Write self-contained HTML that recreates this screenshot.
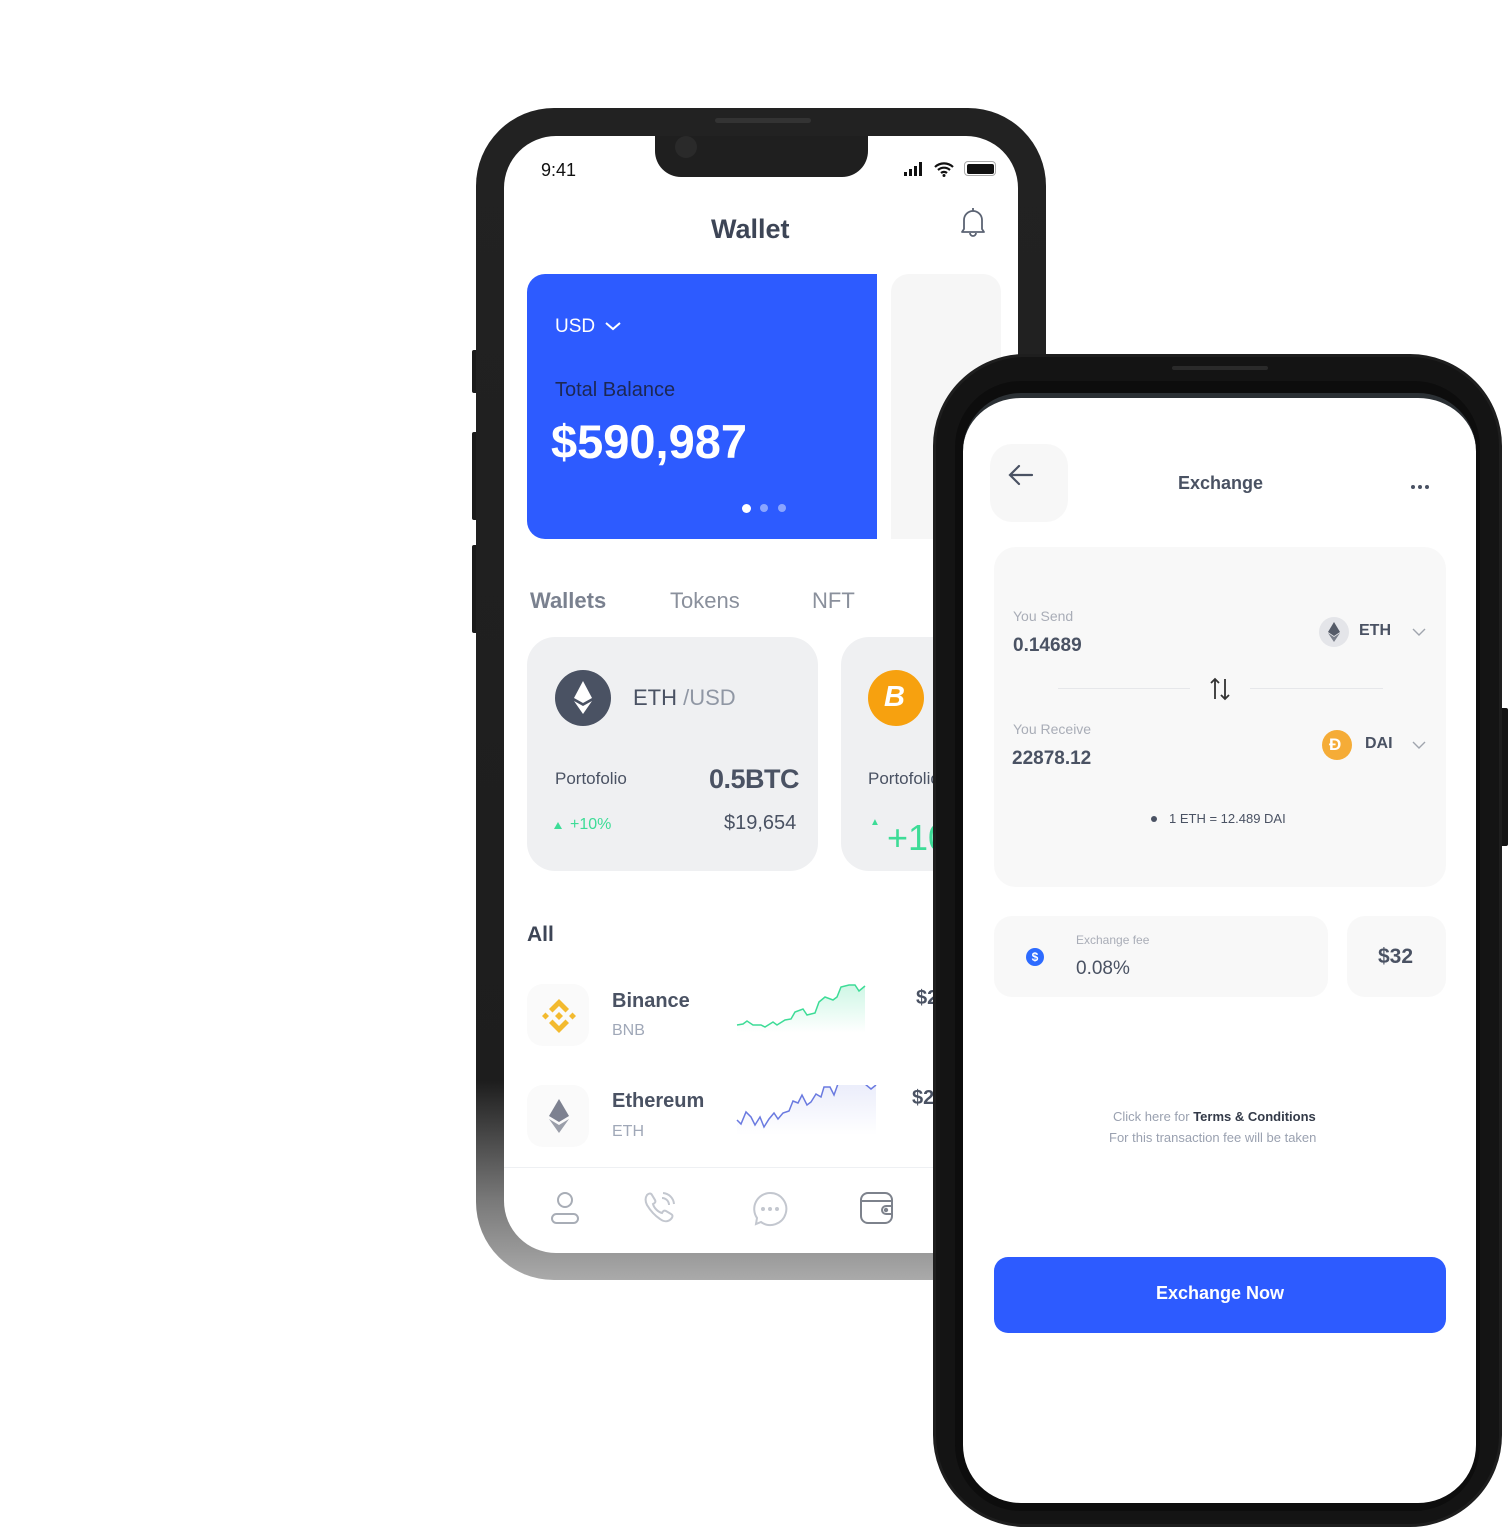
<!DOCTYPE html>
<html><head><meta charset="utf-8"><style>
*{margin:0;padding:0;box-sizing:border-box}
body{width:1508px;height:1528px;background:#fff;position:relative;overflow:hidden;font-family:"Liberation Sans",sans-serif;color:#3d4556}
.a{position:absolute}
.t{position:absolute;white-space:nowrap;line-height:1}
</style></head><body>

<div class="a" style="left:472px;top:350px;width:8px;height:43px;background:#1a1a1a;border-radius:2px"></div>
<div class="a" style="left:472px;top:432px;width:8px;height:88px;background:#1a1a1a;border-radius:2px"></div>
<div class="a" style="left:472px;top:545px;width:8px;height:88px;background:#1a1a1a;border-radius:2px"></div>
<div class="a" style="left:476px;top:108px;width:570px;height:1172px;border-radius:78px;background:linear-gradient(180deg,#222 0%,#1d1d1d 83%,#777 93%,#aaa 100%)"></div>
<div class="a" style="left:504px;top:136px;width:514px;height:1117px;border-radius:52px;background:#fff;overflow:hidden">
  <div class="a" style="left:151px;top:-2px;width:213px;height:43px;background:#1f1f1f;border-radius:0 0 26px 26px"></div>
  <div class="a" style="left:171px;top:0px;width:22px;height:22px;border-radius:50%;background:#2a2a2a"></div>
</div>
<div class="a" style="left:715px;top:118px;width:96px;height:5px;border-radius:3px;background:#333"></div>
<div class="t" style="left:541px;top:161px;font-size:18px;color:#111">9:41</div>
<div class="a" style="left:904px;top:172px;width:3px;height:4px;background:#111"></div>
<div class="a" style="left:909px;top:169px;width:3px;height:7px;background:#111"></div>
<div class="a" style="left:914px;top:166px;width:3px;height:10px;background:#111"></div>
<div class="a" style="left:919px;top:162px;width:3px;height:14px;background:#111"></div>
<svg class="a" style="left:934px;top:161px" width="20" height="16" viewBox="0 0 20 16"><path d="M1 6a13 13 0 0 1 18 0M4 9a9 9 0 0 1 12 0M7 12a4.5 4.5 0 0 1 6 0" stroke="#111" stroke-width="2.2" fill="none"/><circle cx="10" cy="14.5" r="1.5" fill="#111"/></svg>
<div class="a" style="left:964px;top:161px;width:32px;height:15px;border:1.5px solid #aaa;border-radius:4px;padding:1.5px"><div style="width:100%;height:100%;background:#111;border-radius:2px"></div></div>
<div class="t" style="left:711px;top:216px;font-size:27px;font-weight:bold;color:#3d4556">Wallet</div>
<svg class="a" style="left:959px;top:206px" width="28" height="32" viewBox="0 0 28 32"><path d="M5 23V14a9 9 0 0 1 18 0v9l2 3H3z" stroke="#5b6373" stroke-width="1.8" fill="none" stroke-linejoin="round"/><path d="M11 27a3 3 0 0 0 6 0M14 2v3" stroke="#5b6373" stroke-width="1.8" fill="none"/></svg>
<div class="a" style="left:527px;top:274px;width:350px;height:265px;background:#2d5bff;border-radius:18px 0 0 18px"></div>
<div class="a" style="left:891px;top:274px;width:110px;height:265px;background:#f6f6f6;border-radius:18px 18px 0 0"></div>
<div class="t" style="left:555px;top:317px;font-size:19px;color:#fff">USD</div>
<svg class="a" style="left:604px;top:320px" width="18" height="12" viewBox="0 0 18 12"><path d="M2 3l7 6 7-6" stroke="#fff" stroke-width="2" fill="none"/></svg>
<div class="t" style="left:555px;top:380px;font-size:20px;color:#1c2854">Total Balance</div>
<div class="t" style="left:551px;top:418px;font-size:47px;font-weight:bold;color:#fff">$590,987</div>
<div class="a" style="left:742px;top:504px;width:9px;height:9px;border-radius:50%;background:#fff"></div>
<div class="a" style="left:760px;top:504px;width:8px;height:8px;border-radius:50%;background:#8aa5ff"></div>
<div class="a" style="left:778px;top:504px;width:8px;height:8px;border-radius:50%;background:#8aa5ff"></div>
<div class="t" style="left:530px;top:590px;font-size:22px;font-weight:bold;color:#7a818f">Wallets</div>
<div class="t" style="left:670px;top:590px;font-size:22px;color:#8a909c">Tokens</div>
<div class="t" style="left:812px;top:590px;font-size:22px;color:#8a909c">NFT</div>
<div class="a" style="left:527px;top:637px;width:291px;height:234px;background:#eff0f2;border-radius:28px"></div>
<div class="a" style="left:555px;top:670px;width:56px;height:56px;border-radius:50%;background:#4a5263"></div>
<svg class="a" style="left:571px;top:680px" width="24" height="36" viewBox="0 0 24 36"><path d="M12 1L3 18l9 5 9-5z" fill="#fff"/><path d="M3 21l9 13 9-13-9 5z" fill="#fff"/></svg>
<div class="t" style="left:633px;top:687px;font-size:22px;color:#4a5263">ETH <span style="color:#9097a4">/USD</span></div>
<div class="t" style="left:555px;top:770px;font-size:17px;color:#4a5263">Portofolio</div>
<div class="t" style="left:709px;top:766px;font-size:27px;font-weight:bold;color:#4a5263;letter-spacing:-0.5px">0.5BTC</div>
<div class="a" style="left:554px;top:822px;width:0;height:0;border-left:4px solid transparent;border-right:4px solid transparent;border-bottom:7px solid #3ddc97"></div>
<div class="t" style="left:570px;top:817px;font-size:16px;color:#3ddc97">+10%</div>
<div class="t" style="left:724px;top:813px;font-size:20px;color:#4a5263">$19,654</div>
<div class="a" style="left:841px;top:637px;width:150px;height:234px;background:#eff0f2;border-radius:28px"></div>
<div class="a" style="left:868px;top:670px;width:56px;height:56px;border-radius:50%;background:#f7a10f"></div>
<div class="t" style="left:884px;top:683px;font-size:29px;font-weight:bold;color:#fff;font-style:italic">B</div>
<div class="t" style="left:868px;top:770px;font-size:17px;color:#4a5263">Portofolio</div>
<div class="t" style="left:870px;top:818px;font-size:10px;color:#3ddc97">▲</div>
<div class="t" style="left:887px;top:820px;font-size:36px;color:#3ddc97">+10</div>
<div class="t" style="left:527px;top:924px;font-size:21px;font-weight:bold;color:#3d4556">All</div>
<div class="a" style="left:527px;top:984px;width:62px;height:62px;border-radius:16px;background:#fafafa"></div>
<svg class="a" style="left:539px;top:996px" width="40" height="40" viewBox="0 0 40 40" fill="#f3ba2f"><path d="M20 3l10 10-3.5 3.5L20 10l-6.5 6.5L10 13z"/><path d="M20 37l10-10-3.5-3.5L20 30l-6.5-6.5L10 27z"/><path d="M3 20l3.5-3.5L10 20l-3.5 3.5zM30 20l3.5-3.5L37 20l-3.5 3.5zM20 16l4 4-4 4-4-4z"/></svg>
<div class="t" style="left:612px;top:991px;font-size:20px;font-weight:bold;color:#4a5263">Binance</div>
<div class="t" style="left:612px;top:1023px;font-size:16px;color:#a0a8b8">BNB</div>
<svg class="a" style="left:735px;top:983px" width="145" height="50" viewBox="0 0 145 50"><defs><linearGradient id="g1" x1="0" y1="0" x2="0" y2="1"><stop offset="0" stop-color="#3ddc97" stop-opacity=".25"/><stop offset="1" stop-color="#3ddc97" stop-opacity="0"/></linearGradient><linearGradient id="g2" x1="0" y1="0" x2="0" y2="1"><stop offset="0" stop-color="#6a7ae0" stop-opacity=".15"/><stop offset="1" stop-color="#6a7ae0" stop-opacity="0"/></linearGradient></defs><path d="M2 42l6-1 4-3 6 4 8 0 4 2 8-5 4 3 8-5 6-1 4-7 8-3 4 6 8-2 4-11 6-5 8 3 4-3 4-10 8-2 6 0 4 6 6-5V50H2z" fill="url(#g1)"/><path d="M2 42l6-1 4-3 6 4 8 0 4 2 8-5 4 3 8-5 6-1 4-7 8-3 4 6 8-2 4-11 6-5 8 3 4-3 4-10 8-2 6 0 4 6 6-5" stroke="#3ddc97" stroke-width="1.5" fill="none"/></svg>
<div class="t" style="left:916px;top:988px;font-size:20px;font-weight:bold;color:#4a5263">$2</div>
<div class="a" style="left:527px;top:1085px;width:62px;height:62px;border-radius:16px;background:#fafafa"></div>
<svg class="a" style="left:547px;top:1098px" width="24" height="36" viewBox="0 0 24 36"><path d="M12 1L2 18l10 6 10-6z" fill="#7d8190"/><path d="M2 21l10 14 10-14-10 6z" fill="#9a9ea9"/></svg>
<div class="t" style="left:612px;top:1091px;font-size:20px;font-weight:bold;color:#4a5263">Ethereum</div>
<div class="t" style="left:612px;top:1124px;font-size:16px;color:#a0a8b8">ETH</div>
<svg class="a" style="left:735px;top:1085px" width="145" height="50" viewBox="0 0 145 50"><path d="M2 35l4 4 5-12 5 5 4 8 5-8 4 10 5-8 5-6 4 6 5-6 6-2 4-10 5 2 4-8 5 10 4-3 5-8 5 3 3-10 6 0 4 8 5-14 8-2 6 0 4 5 8 0 6 5 5-4V50H2z" fill="url(#g2)"/><path d="M2 35l4 4 5-12 5 5 4 8 5-8 4 10 5-8 5-6 4 6 5-6 6-2 4-10 5 2 4-8 5 10 4-3 5-8 5 3 3-10 6 0 4 8 5-14 8-2 6 0 4 5 8 0 6 5 5-4" stroke="#6a7ae0" stroke-width="1.5" fill="none"/></svg>
<div class="t" style="left:912px;top:1088px;font-size:20px;font-weight:bold;color:#4a5263">$2</div>
<div class="a" style="left:504px;top:1167px;width:450px;height:1px;background:#eef0f3"></div>
<svg class="a" style="left:548px;top:1190px" width="34" height="36" viewBox="0 0 34 36" fill="none" stroke="#a8adb6" stroke-width="2"><circle cx="17" cy="10" r="7"/><rect x="4" y="24" width="26" height="9" rx="4.5"/></svg>
<svg class="a" style="left:642px;top:1190px" width="36" height="36" viewBox="0 0 36 36" fill="none" stroke="#c3c7cf" stroke-width="2"><path d="M5 5c2-2 4-2 5 0l3 5c1 2 0 3-2 4 1 4 5 8 9 9 1-2 2-3 4-2l5 3c2 1 2 3 0 5-3 3-7 3-11 0C12 25 8 20 5 15 3 11 3 8 5 5z"/><path d="M21 3a12 12 0 0 1 11 11M20 8a7 7 0 0 1 7 7"/></svg>
<svg class="a" style="left:752px;top:1191px" width="36" height="36" viewBox="0 0 36 36" fill="none" stroke="#c3c7cf" stroke-width="2"><path d="M18 2a16 16 0 1 1-9 29l-5 2 1-6A16 16 0 0 1 18 2z"/><circle cx="11" cy="18" r="1" fill="#c3c7cf"/><circle cx="18" cy="18" r="1" fill="#c3c7cf"/><circle cx="25" cy="18" r="1" fill="#c3c7cf"/></svg>
<svg class="a" style="left:859px;top:1191px" width="36" height="34" viewBox="0 0 36 34" fill="none" stroke="#7d828c" stroke-width="2"><rect x="2" y="2" width="31" height="30" rx="7"/><path d="M2 10h31"/><path d="M33 15h-6a4 4 0 0 0 0 8h6"/><circle cx="27" cy="19" r="1.2" fill="#7d828c"/></svg>

<div class="a" style="left:1498px;top:708px;width:10px;height:138px;background:#151515;border-radius:2px"></div>
<div class="a" style="left:933px;top:354px;width:569px;height:1173px;border-radius:92px;background:#141414;border:3px solid #1e1e1e"></div>
<div class="a" style="left:955px;top:381px;width:525px;height:1130px;border-radius:66px;background:#0d0d0d"></div>
<div class="a" style="left:963px;top:393px;width:513px;height:1110px;border-radius:58px;background:#fff;border-top:5px solid #2b3034"></div>
<div class="a" style="left:1172px;top:366px;width:96px;height:4px;border-radius:2px;background:#2a2a2a"></div>
<div class="a" style="left:990px;top:444px;width:78px;height:78px;border-radius:22px;background:#f7f7f7"></div>
<svg class="a" style="left:1008px;top:464px" width="26" height="22" viewBox="0 0 26 22" fill="none" stroke="#4a5263" stroke-width="2.2" stroke-linecap="round"><path d="M24 11H3M11 2L2 11l9 9"/></svg>
<div class="t" style="left:1178px;top:474px;font-size:18px;font-weight:bold;color:#4a5263">Exchange</div>
<div class="a" style="left:1411px;top:485px;width:4px;height:4px;border-radius:50%;background:#4a5263;box-shadow:7px 0 #4a5263,14px 0 #4a5263"></div>
<div class="a" style="left:994px;top:547px;width:452px;height:340px;border-radius:22px;background:#f8f8f8"></div>
<div class="t" style="left:1013px;top:609px;font-size:14px;color:#a9adb7">You Send</div>
<div class="t" style="left:1013px;top:636px;font-size:19px;font-weight:bold;color:#4a5263">0.14689</div>
<div class="a" style="left:1319px;top:617px;width:30px;height:30px;border-radius:50%;background:#e4e5e9"></div>
<svg class="a" style="left:1327px;top:622px" width="14" height="20" viewBox="0 0 14 20"><path d="M7 0L1 10l6 4 6-4z" fill="#555b68"/><path d="M1 11l6 9 6-9-6 4z" fill="#7b808b"/></svg>
<div class="t" style="left:1359px;top:623px;font-size:16px;font-weight:bold;color:#4a5263">ETH</div>
<svg class="a" style="left:1411px;top:627px" width="16" height="10" viewBox="0 0 16 10"><path d="M2 2l6 6 6-6" stroke="#a0a5ae" stroke-width="1.4" fill="none"/></svg>
<div class="a" style="left:1058px;top:688px;width:132px;height:1px;background:#e6e7ea"></div>
<div class="a" style="left:1250px;top:688px;width:133px;height:1px;background:#e6e7ea"></div>
<svg class="a" style="left:1209px;top:677px" width="22" height="24" viewBox="0 0 22 24" fill="none" stroke="#333" stroke-width="1.8"><path d="M6 22V2M2 6l4-4 4 4M16 2v20M12 18l4 4 4-4"/></svg>
<div class="t" style="left:1013px;top:722px;font-size:14px;color:#a9adb7">You Receive</div>
<div class="t" style="left:1012px;top:749px;font-size:19px;font-weight:bold;color:#4a5263">22878.12</div>
<div class="a" style="left:1322px;top:730px;width:30px;height:30px;border-radius:50%;background:#f5ac37"></div>
<div class="t" style="left:1329px;top:736px;font-size:17px;font-weight:bold;color:#fff">Đ</div>
<div class="t" style="left:1365px;top:736px;font-size:16px;font-weight:bold;color:#4a5263">DAI</div>
<svg class="a" style="left:1411px;top:740px" width="16" height="10" viewBox="0 0 16 10"><path d="M2 2l6 6 6-6" stroke="#a0a5ae" stroke-width="1.4" fill="none"/></svg>
<div class="a" style="left:1151px;top:816px;width:6px;height:6px;border-radius:50%;background:#4a5263"></div>
<div class="t" style="left:1169px;top:812px;font-size:13px;color:#4a5263">1 ETH = 12.489 DAI</div>
<div class="a" style="left:994px;top:916px;width:334px;height:81px;border-radius:18px;background:#f8f8f8"></div>
<div class="a" style="left:1347px;top:916px;width:99px;height:81px;border-radius:18px;background:#f8f8f8"></div>
<div class="a" style="left:1026px;top:948px;width:18px;height:18px;border-radius:50%;background:#2d6bff;color:#fff;font-size:12px;font-weight:bold;text-align:center;line-height:18px">$</div>
<div class="t" style="left:1076px;top:934px;font-size:12px;color:#a9adb7">Exchange fee</div>
<div class="t" style="left:1076px;top:959px;font-size:19px;color:#4a5263">0.08%</div>
<div class="t" style="left:1378px;top:946px;font-size:21px;font-weight:bold;color:#4a5263">$32</div>
<div class="t" style="left:1113px;top:1110px;font-size:13px;color:#9aa1b0">Click here for <b style="color:#333a48">Terms &amp; Conditions</b></div>
<div class="t" style="left:1109px;top:1131px;font-size:13px;color:#9aa1b0">For this transaction fee will be taken</div>
<div class="a" style="left:994px;top:1257px;width:452px;height:76px;border-radius:14px;background:#2d5bff"></div>
<div class="t" style="left:994px;top:1284px;width:452px;text-align:center;font-size:18px;font-weight:bold;color:#fff">Exchange Now</div>
</body></html>
